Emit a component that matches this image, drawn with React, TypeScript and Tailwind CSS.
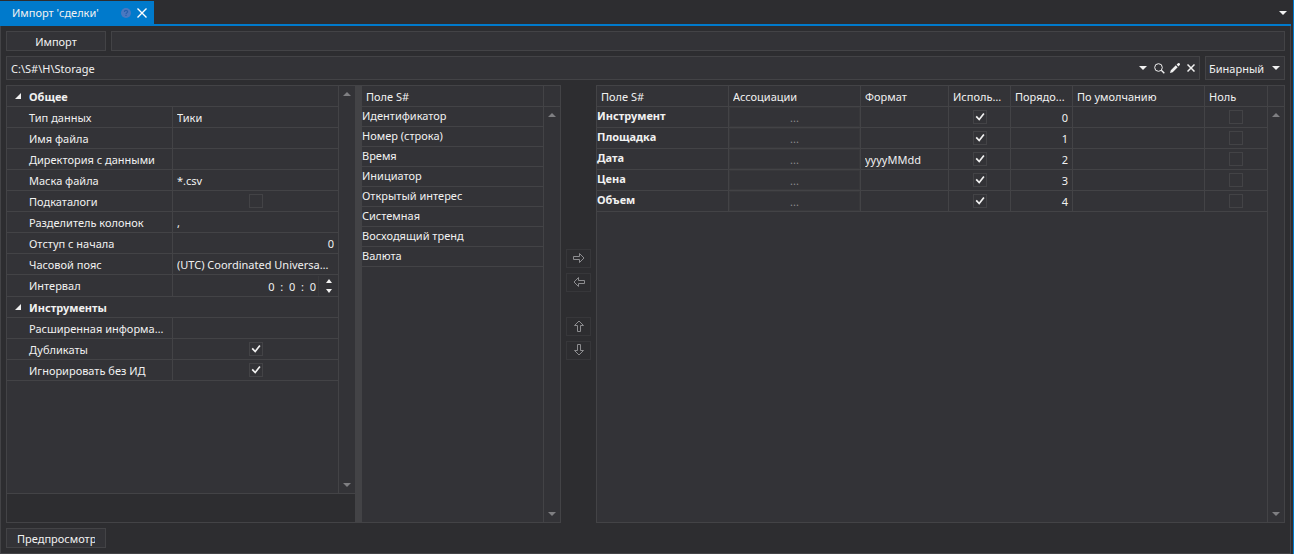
import type { ReactNode } from 'react';
import { clsx } from 'clsx';

type Property = {
  id: string;
  label: string;
  editor: 'text' | 'number' | 'check' | 'select' | 'time';
  value?: string;
  checked?: boolean;
};

const groups: { title: string; items: Property[] }[] = [
  {
    title: 'Общее',
    items: [
      { id: 'dataType', label: 'Тип данных', editor: 'select', value: 'Тики' },
      { id: 'fileName', label: 'Имя файла', editor: 'text' },
      { id: 'directory', label: 'Директория с данными', editor: 'text' },
      { id: 'mask', label: 'Маска файла', editor: 'text', value: '*.csv' },
      { id: 'subdirs', label: 'Подкаталоги', editor: 'check' },
      { id: 'separator', label: 'Разделитель колонок', editor: 'text', value: ',' },
      { id: 'offset', label: 'Отступ с начала', editor: 'number', value: '0' },
      {
        id: 'timeZone',
        label: 'Часовой пояс',
        editor: 'select',
        value: '(UTC) Coordinated Universal Time',
      },
      { id: 'interval', label: 'Интервал', editor: 'time', value: '0  :  0  :  0' },
    ],
  },
  {
    title: 'Инструменты',
    items: [
      { id: 'extended', label: 'Расширенная информация', editor: 'text' },
      { id: 'duplicates', label: 'Дубликаты', editor: 'check', checked: true },
      { id: 'ignoreNoId', label: 'Игнорировать без ИД', editor: 'check', checked: true },
    ],
  },
];

const availableFields = [
  'Идентификатор',
  'Номер (строка)',
  'Время',
  'Инициатор',
  'Открытый интерес',
  'Системная',
  'Восходящий тренд',
  'Валюта',
];

const mappedFields = [
  { name: 'Инструмент', format: '' },
  { name: 'Площадка', format: '' },
  { name: 'Дата', format: 'yyyyMMdd' },
  { name: 'Цена', format: '' },
  { name: 'Объем', format: '' },
];

const columns = [
  { title: 'Поле S#', width: 'w-[132px]' },
  { title: 'Ассоциации', width: 'w-[132px]' },
  { title: 'Формат', width: 'w-[88px]' },
  { title: 'Используется', width: 'w-[62px]' },
  { title: 'Порядо...', width: 'w-[62px]' },
  { title: 'По умолчанию', width: '' },
  { title: 'Ноль', width: 'w-[63px]' },
];

function Caret({ className }: { className?: string }) {
  return (
    <svg viewBox="0 0 8 4" className={clsx('h-1 w-2 shrink-0 fill-current', className)}>
      <path d="M0 0h8L4 4z" />
    </svg>
  );
}

function Check({ id, label, checked }: { id?: string; label?: string; checked?: boolean }) {
  return (
    <span className="relative mx-auto block size-3.5">
      <input
        id={id}
        type="checkbox"
        aria-label={label}
        defaultChecked={checked}
        className="peer block size-3.5 appearance-none border border-[#434346]"
      />
      <svg
        viewBox="0 0 14 14"
        className="pointer-events-none absolute inset-0 hidden size-3.5 fill-none stroke-[#f1f1f1] stroke-[1.7] peer-checked:block"
      >
        <path d="M3.200 6.300 6.200 9.500 10.900 3.500" />
      </svg>
    </span>
  );
}

function ScrollBar({ header }: { header?: boolean }) {
  return (
    <div className="flex w-4 shrink-0 flex-col items-center text-[#7f7f82]">
      {header && <div className="h-[21px] w-full shrink-0 border-b border-[#434346]" />}
      <button aria-label="Вверх" className="flex h-4 w-full items-center justify-center">
        <Caret className="rotate-180" />
      </button>
      <div className="flex-1" />
      <button aria-label="Вниз" className="flex h-4 w-full items-center justify-center">
        <Caret />
      </button>
    </div>
  );
}

function Editor({ item }: { item: Property }) {
  switch (item.editor) {
    case 'check':
      return <Check id={item.id} checked={item.checked} />;
    case 'select':
      return (
        <select
          id={item.id}
          className="block h-5 w-full appearance-none truncate pt-0.5 pr-2 pl-1 leading-[18px]"
        >
          <option>{item.value}</option>
        </select>
      );
    case 'time':
      return (
        <div className="flex">
          <input
            id={item.id}
            defaultValue={item.value}
            className="block h-5 min-w-0 flex-1 pt-px pr-0.5 text-right leading-[18px]"
          />
          <div className="flex w-5 flex-col border-l border-[#3a3a3d]">
            <button aria-label="Больше" className="flex flex-1 items-center justify-center">
              <svg viewBox="0 0 6 4" className="h-1 w-1.5 fill-current">
                <path d="M0 4h6L3 0z" />
              </svg>
            </button>
            <button aria-label="Меньше" className="flex flex-1 items-center justify-center">
              <svg viewBox="0 0 6 4" className="h-1 w-1.5 fill-current">
                <path d="M0 0h6L3 4z" />
              </svg>
            </button>
          </div>
        </div>
      );
    default:
      return (
        <input
          id={item.id}
          defaultValue={item.value}
          className={clsx(
            'block h-5 w-full px-1 pt-px leading-[18px]',
            item.editor === 'number' && 'text-right',
          )}
        />
      );
  }
}

function PropertyGrid() {
  return (
    <div className="flex w-[349px] shrink-0 flex-col border-y border-l border-[#434346]">
      <div className="flex flex-1 border-b border-[#434346] bg-[#333337]">
        <div className="min-w-0 flex-1 border-r border-[#434346]">
          {groups.map((group) => (
            <section key={group.title}>
              <h2 className="flex h-[21px] items-center border-b border-[#434346] font-bold">
                <svg viewBox="0 0 6 6" className="mr-2 ml-2 size-1.5 fill-current">
                  <path d="M6 0v6H0z" />
                </svg>
                <span className="pt-0.5 leading-[18px]">{group.title}</span>
              </h2>
              {group.items.map((item) => (
                <div
                  key={item.id}
                  className={clsx(
                    'flex border-b border-[#434346]',
                    item.editor === 'time' ? 'h-[22px]' : 'h-[21px]',
                  )}
                >
                  <label
                    htmlFor={item.id}
                    className="w-[166px] shrink-0 truncate border-r border-[#434346] pt-0.5 pr-1 pl-[22px] leading-[18px]"
                  >
                    {item.label}
                  </label>
                  <div className="min-w-0 flex-1 self-center">
                    <Editor item={item} />
                  </div>
                </div>
              ))}
            </section>
          ))}
        </div>
        <ScrollBar />
      </div>
      <div className="h-7" />
    </div>
  );
}

function FieldList() {
  return (
    <div className="flex w-[199px] shrink-0 border-y border-r border-[#434346] bg-[#333337]">
      <div className="min-w-0 flex-1 border-r border-[#434346]">
        <div className="h-[21px] border-b border-[#434346] px-1 pt-0.5 leading-[18px]">
          Поле S#
        </div>
        <ul>
          {availableFields.map((field) => (
            <li key={field} className="h-5 truncate border-b border-[#434346] leading-[18px]">
              {field}
            </li>
          ))}
        </ul>
      </div>
      <ScrollBar header />
    </div>
  );
}

function ArrowButton({ label, turn }: { label: string; turn: string }) {
  return (
    <button
      aria-label={label}
      className="flex h-[19px] w-[25px] items-center justify-center border border-[#37373a] text-[#8c8c8f]"
    >
      <svg viewBox="0 0 12 12" className={clsx('size-3 fill-none stroke-current', turn)}>
        <path d="M.5 4.500h6v-3L11 6l-4.500 4.500v-3h-6z" />
      </svg>
    </button>
  );
}

function Cell({ children, className }: { children?: ReactNode; className?: string }) {
  return (
    <td className={clsx('h-[21px] border-r border-b border-[#434346] py-0', className)}>
      {children}
    </td>
  );
}

function MappingTable() {
  return (
    <div className="flex min-w-0 flex-1 border border-[#434346] bg-[#333337]">
      <div className="min-w-0 flex-1 border-r border-[#434346]">
        <table className="-mr-px w-[calc(100%+1px)] table-fixed border-separate border-spacing-0">
          <thead>
            <tr>
              {columns.map((column) => (
                <th
                  key={column.title}
                  className={clsx(
                    'h-[21px] border-r border-b border-[#434346] px-1 py-0 text-left font-normal',
                    column.width,
                  )}
                >
                  <div className="truncate pt-0.5 leading-[18px]">{column.title}</div>
                </th>
              ))}
            </tr>
          </thead>
          <tbody>
            {mappedFields.map((field, index) => (
              <tr key={field.name}>
                <Cell className="px-0 align-top leading-[18px] font-bold">{field.name}</Cell>
                <Cell className="px-0">
                  <button
                    aria-label={`Ассоциации: ${field.name}`}
                    className="block h-5 w-full border border-[#38383b] leading-5 text-[#8c8c8f]"
                  >
                    ...
                  </button>
                </Cell>
                <Cell className="px-0">
                  <input
                    aria-label={`Формат: ${field.name}`}
                    defaultValue={field.format}
                    className="block h-5 w-full px-1 pt-px leading-[18px]"
                  />
                </Cell>
                <Cell className="px-0">
                  <Check label={`Используется: ${field.name}`} checked />
                </Cell>
                <Cell className="px-1 text-right">
                  <div className="pt-0.5 leading-[18px]">{index}</div>
                </Cell>
                <Cell className="px-0">
                  <input
                    aria-label={`По умолчанию: ${field.name}`}
                    className="block h-5 w-full px-1 pt-px leading-[18px]"
                  />
                </Cell>
                <Cell className="px-0">
                  <Check label={`Ноль: ${field.name}`} />
                </Cell>
              </tr>
            ))}
          </tbody>
        </table>
      </div>
      <ScrollBar header />
    </div>
  );
}

export default function App() {
  return (
    <div className="flex min-h-screen flex-col border-r border-[#007acc] bg-[#2d2d30] pr-0.5 font-['Noto_Sans','Open_Sans',sans-serif] text-[11px] text-[#f1f1f1]">
      <header className="flex justify-between border-b-2 border-[#007acc] pt-px">
        <div className="flex h-[23px] w-[154px] items-center bg-[#007acc] pl-3">
          <span className="flex-1 pt-0.5 whitespace-nowrap">Импорт 'сделки'</span>
          <button aria-label="Справка" className="mr-1.5">
            <svg viewBox="0 0 10 10" className="size-2.5">
              <circle cx="5" cy="5" r="5" fill="#4a78c0" />
              <path
                d="M3.400 3.900C3.400 1.900 6.600 1.900 6.600 3.800 6.600 4.900 5 4.900 5 6.200M5 7v1"
                fill="none"
                stroke="#2560ad"
                strokeWidth="1.200"
              />
            </svg>
          </button>
          <button aria-label="Закрыть" className="mr-[7px]">
            <svg viewBox="0 0 10 10" className="size-2.5 fill-none stroke-white stroke-[1.400]">
              <path d="M.5.5l9 9M9.500.5l-9 9" />
            </svg>
          </button>
        </div>
        <button aria-label="Список вкладок" className="mr-1">
          <Caret />
        </button>
      </header>

      <main className="flex flex-1 flex-col gap-[5px] border-x border-b border-[#434346] p-[5px]">
        <div className="flex gap-[5px]">
          <button className="h-5 w-[100px] border border-[#434346] bg-[#333337] pt-0.5 leading-4">
            Импорт
          </button>
          <div role="progressbar" className="flex-1 border border-[#434346] bg-[#333337]" />
        </div>

        <div className="flex h-6 gap-[5px]">
          <div className="flex flex-1 items-center border border-[#434346] bg-[#333337]">
            <input
              aria-label="Хранилище"
              defaultValue="C:\S#\H\Storage"
              className="h-5 min-w-0 flex-1 px-1 pt-px leading-[18px]"
            />
            <div className="flex items-center">
              <button aria-label="Открыть список" className="flex w-4 justify-center">
                <Caret />
              </button>
              <button aria-label="Найти" className="flex w-4 justify-center">
                <svg viewBox="0 0 11 11" className="size-[11px] fill-none stroke-current">
                  <circle cx="4.500" cy="4.500" r="3.800" />
                  <path d="M7.300 7.300 10.300 10.300" strokeWidth="1.400" />
                </svg>
              </button>
              <button aria-label="Изменить" className="flex w-4 justify-center">
                <svg viewBox="0 0 10 10" className="size-2.5 fill-current">
                  <path d="M0 10 .8 7.300 5.800 2.300 7.700 4.200 2.700 9.200zM6.600 1.600 8 .2Q9-.3 9.800.5 10.300 1.200 9.800 2L8.400 3.400z" />
                </svg>
              </button>
              <button aria-label="Очистить" className="flex w-4 justify-center">
                <svg viewBox="0 0 8 8" className="size-2 fill-none stroke-current stroke-[1.500]">
                  <path d="M.5.5l7 7M7.500.5l-7 7" />
                </svg>
              </button>
            </div>
          </div>
          <div className="relative w-20 border border-[#434346] bg-[#333337]">
            <select
              aria-label="Формат хранилища"
              className="block h-full w-full appearance-none pt-0.5 pl-[3px]"
            >
              <option>Бинарный</option>
              <option>CSV</option>
            </select>
            <Caret className="pointer-events-none absolute top-[9px] right-1" />
          </div>
        </div>

        <div className="flex flex-1">
          <PropertyGrid />
          <div className="w-[7px] shrink-0 bg-[#434346]" />
          <FieldList />
          <div className="flex w-[35px] shrink-0 flex-col items-center justify-center gap-[25px]">
            <div className="flex flex-col gap-[5px]">
              <ArrowButton label="Добавить поле" turn="" />
              <ArrowButton label="Убрать поле" turn="rotate-180" />
            </div>
            <div className="flex flex-col gap-[5px]">
              <ArrowButton label="Поднять" turn="-rotate-90" />
              <ArrowButton label="Опустить" turn="rotate-90" />
            </div>
          </div>
          <MappingTable />
        </div>

        <button className="h-5 w-[100px] border border-[#434346] bg-[#333337] px-2.5 pt-0.5 leading-4">
          <span className="block overflow-hidden text-left whitespace-nowrap">Предпросмотр</span>
        </button>
      </main>
    </div>
  );
}
